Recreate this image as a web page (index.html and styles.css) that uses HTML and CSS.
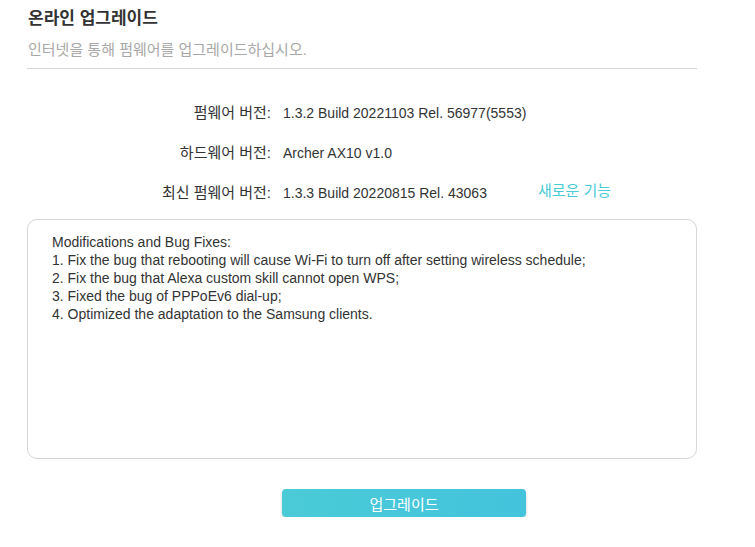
FILE: index.html
```html
<!DOCTYPE html>
<html lang="ko">
<head>
<meta charset="utf-8">
<link rel="stylesheet" href="styles.css">
</head>
<body>
<div class="page">
  <h1 class="title">온라인 업그레이드</h1>
  <p class="subtitle">인터넷을 통해 펌웨어를 업그레이드하십시오.</p>
  <div class="info">
    <div class="label">펌웨어 버전:</div>
    <div class="value">1.3.2 Build 20221103 Rel. 56977(5553)</div>
    <div class="label">하드웨어 버전:</div>
    <div class="value">Archer AX10 v1.0</div>
    <div class="label">최신 펌웨어 버전:</div>
    <div class="value latest"><span>1.3.3 Build 20220815 Rel. 43063</span><a class="link">새로운 기능</a></div>
  </div>
  <div class="notes">
    <div>Modifications and Bug Fixes:</div>
    <div>1. Fix the bug that rebooting will cause Wi-Fi to turn off after setting wireless schedule;</div>
    <div>2. Fix the bug that Alexa custom skill cannot open WPS;</div>
    <div>3. Fixed the bug of PPPoEv6 dial-up;</div>
    <div>4. Optimized the adaptation to the Samsung clients.</div>
  </div>
  <div class="actions">
    <button class="btn">업그레이드</button>
  </div>
</div>
</body>
</html>
```
FILE: styles.css
```css
html, body {
  margin: 0;
  padding: 0;
  background: #fff;
}
body {
  font-family: "Liberation Sans", "Noto Sans CJK KR", sans-serif;
  color: #333;
}
.page {
  width: 670px;
  margin-left: 27px;
}
.title {
  margin: 0;
  padding-top: 8px;
  padding-left: 1px;
  font-size: 17px;
  font-weight: bold;
  line-height: 22px;
  color: #333;
}
.subtitle {
  margin: 0;
  margin-top: 10px;
  padding-left: 1px;
  padding-bottom: 8px;
  font-size: 15px;
  line-height: 20px;
  color: #a8a8a8;
  border-bottom: 1px solid #d5d5d5;
}
.info {
  display: grid;
  grid-template-columns: 244px 1fr;
  column-gap: 12px;
  row-gap: 20px;
  margin-top: 34px;
  font-size: 14px;
  line-height: 20px;
}
.label {
  text-align: right;
  font-size: 15px;
  color: #333;
}
.value {
  color: #333;
}
.latest {
  display: flex;
}
.latest span {
  width: 255px;
}
.link {
  color: #4acbd6;
  font-size: 15px;
  margin-top: -2px;
}
.notes {
  margin-top: 16px;
  height: 240px;
  box-sizing: border-box;
  padding: 13px 24px;
  border: 1px solid #d6d6d6;
  border-radius: 10px;
  font-size: 14px;
  line-height: 18px;
  color: #333;
}
.actions {
  display: grid;
  grid-template-columns: 244px 244px;
  column-gap: 11px;
  margin-top: 30px;
}
.btn {
  grid-column: 2;
  height: 28px;
  padding: 0;
  border: none;
  border-radius: 4px;
  background: linear-gradient(90deg, #4acbd6, #44c3dd);
  box-shadow: 0 2px 3px rgba(0, 0, 0, 0.2);
  color: #fff;
  font-family: "Liberation Sans", "Noto Sans CJK KR", sans-serif;
  font-size: 15px;
}
```
